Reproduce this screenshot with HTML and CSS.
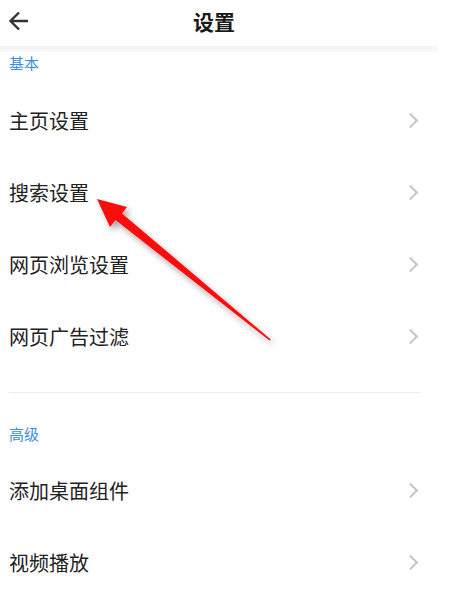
FILE: index.html
```html
<!DOCTYPE html>
<html>
<head>
    <title>设置</title>
    <link rel="stylesheet" href="styles.css">
</head>
<body>
    <div class="page">
        <div class="header">
            <div class="back">
                <svg width="24" height="24" viewBox="0 0 24 24">
                    <path d="M21 12H4M12 3.5L3.5 12L12 20.5" fill="none" stroke="#333" stroke-width="2.4"/>
                </svg>
            </div>
            <div class="title">设置</div>
        </div>
        <div class="header-shadow"></div>

        <div class="section-label first">基本</div>
        <div class="row"><span>主页设置</span><i class="chevron"></i></div>
        <div class="row"><span>搜索设置</span><i class="chevron"></i></div>
        <div class="row"><span>网页浏览设置</span><i class="chevron"></i></div>
        <div class="row"><span>网页广告过滤</span><i class="chevron"></i></div>

        <div class="divider"></div>

        <div class="section-label">高级</div>
        <div class="row"><span>添加桌面组件</span><i class="chevron"></i></div>
        <div class="row"><span>视频播放</span><i class="chevron"></i></div>

        <!-- red pointer drawn over the list -->
        <svg class="pointer" width="456" height="593" viewBox="0 0 456 593">
            <defs>
                <filter id="shade" x="-20%" y="-20%" width="140%" height="140%">
                    <feDropShadow dx="3" dy="4" stdDeviation="3" flood-color="#000" flood-opacity="0.35"/>
                </filter>
            </defs>
            <polygon points="97,199 127,207 122,213.5 270.8,339.5 269.5,340.6 115.5,220 110,227" fill="#fb0d0d" filter="url(#shade)"/>
        </svg>
    </div>
</body>
</html>
```

FILE: styles.css
```css
body {
    margin: 0;
    padding: 0;
    background: #fff;
    font-family: "Noto Sans CJK SC", "Noto Sans", sans-serif;
    color: #222;
}

.page {
    position: relative;
    width: 456px;
    height: 593px;
    overflow: hidden;
}

.header {
    display: flex;
    align-items: center;
    height: 42px;
}

.back {
    width: 30px;
    padding-left: 7px;
    display: flex;
    align-items: center;
}

.title {
    flex: 1;
    text-align: center;
    font-size: 21px;
    font-weight: bold;
    color: #1a1a1a;
    padding-right: 65px;
}

.header-shadow {
    width: 438px;
    height: 6px;
    margin-top: 4px;
    background: linear-gradient(to bottom, #f3f3f3, #fafafa);
}

.section-label {
    font-size: 15px;
    line-height: 22px;
    color: #3b8de0;
    padding: 30px 0 9px 9px;
}

.section-label.first {
    padding-top: 0;
    padding-bottom: 10px;
}

.row {
    display: flex;
    align-items: center;
    justify-content: space-between;
    height: 72px;
    padding: 0 40px 0 9px;
    font-size: 20px;
}

.chevron {
    width: 9px;
    height: 9px;
    border-top: 2px solid #c6c6c6;
    border-right: 2px solid #c6c6c6;
    transform: rotate(45deg);
}

.divider {
    height: 1px;
    margin: 20px 36px 0 9px;
    background: #eeeeee;
}

.pointer {
    position: absolute;
    left: 0;
    top: 0;
}
```
